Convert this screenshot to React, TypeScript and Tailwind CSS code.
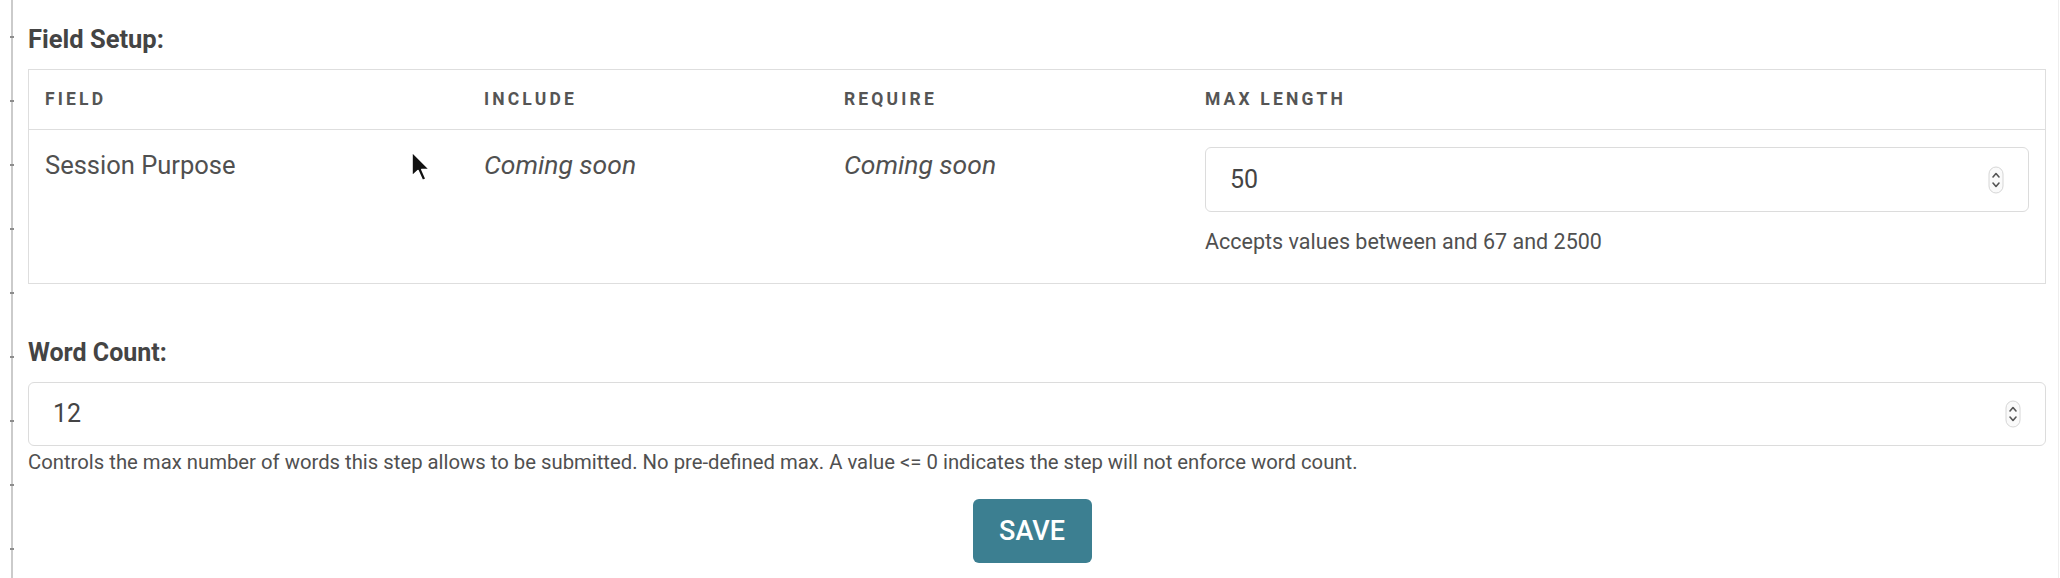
import React from "react";

const font = { fontFamily: "Roboto, 'Liberation Sans', sans-serif" };

function Spinner() {
  return (
    <svg width="16" height="28" viewBox="0 0 16 28" className="shrink-0">
      <rect x="1" y="1" width="14" height="26" rx="7" fill="#fafafa" stroke="#d6d6d6" strokeWidth="1" />
      <path d="M5 11 L8 7.5 L11 11" fill="none" stroke="#555" strokeWidth="1.6" strokeLinecap="round" strokeLinejoin="round" />
      <path d="M5 17 L8 20.5 L11 17" fill="none" stroke="#555" strokeWidth="1.6" strokeLinecap="round" strokeLinejoin="round" />
    </svg>
  );
}

function NumberBox({ value, height }: { value: string; height: string }) {
  return (
    <div
      className={`flex items-center justify-between border border-[#dcdcdc] rounded-[6px] bg-white pl-[24px] pr-[24px] ${height}`}
    >
      <span className="text-[25px] text-[#444]">{value}</span>
      <Spinner />
    </div>
  );
}

export default function App() {
  const ticks = Array.from({ length: 9 });
  return (
    <div className="relative w-[2060px] h-[578px] bg-white flex overflow-hidden" style={font}>
      {/* left rule */}
      <div className="ml-[11px] w-[2px] h-full bg-[#cbcbcb] flex flex-col items-center pt-[36px] gap-[62px]">
        {ticks.map((_, i) => (
          <div key={i} className="w-[4px] h-[2px] bg-[#8c8c8c] shrink-0" />
        ))}
      </div>

      <div className="ml-[15px] mr-[14px] flex-1 flex flex-col">
        <div className="mt-[24px] text-[25.5px] leading-[30px] font-bold text-[#444]">Field Setup:</div>

        <div className="mt-[15px] border border-[#dedede]">
          <div className="grid grid-cols-[439px_360px_361px_1fr] h-[60px] border-b border-[#dedede] items-center text-[17.5px] font-bold tracking-[0.18em] text-[#555]">
            <div className="pl-[16px]">FIELD</div>
            <div className="pl-[16px]">INCLUDE</div>
            <div className="pl-[16px]">REQUIRE</div>
            <div className="pl-[16px]">MAX LENGTH</div>
          </div>
          <div className="grid grid-cols-[439px_360px_361px_1fr] pt-[17px] pb-[27px] text-[25.5px] leading-[36px] text-[#505050]">
            <div className="pl-[16px]">Session Purpose</div>
            <div className="pl-[16px] italic text-[26.5px]">Coming soon</div>
            <div className="pl-[16px] italic text-[26.5px]">Coming soon</div>
            <div className="px-[16px]">
              <NumberBox value="50" height="h-[65px]" />
              <div className="mt-[16px] text-[21.5px] leading-[28px] text-[#505050]">
                Accepts values between and 67 and 2500
              </div>
            </div>
          </div>
        </div>

        <div className="mt-[54px] text-[25px] leading-[30px] font-bold text-[#444]">Word Count:</div>
        <div className="mt-[14px]">
          <NumberBox value="12" height="h-[64px]" />
        </div>
        <div className="mt-[4px] text-[20.3px] leading-[24px] text-[#505050]">
          Controls the max number of words this step allows to be submitted. No pre-defined max. A value &lt;= 0 indicates the step will not enforce word count.
        </div>
        <div className="mt-[25px] flex justify-center pr-[10px]">
          <button className="w-[119px] h-[64px] rounded-[6px] bg-[#3c7f91] text-white text-[27px] font-medium">
            SAVE
          </button>
        </div>
      </div>

      {/* right faint edge */}
      <div className="absolute right-[1px] top-0 h-full w-[1px] bg-[#eeeeee]" />

      {/* mouse cursor */}
      <svg className="absolute left-[410px] top-[150px]" width="22" height="34" viewBox="0 0 22 34">
        <path d="M2 2 L2 26 L8 20.5 L12.5 30.5 L16 29 L11.8 19.5 L19.5 19.5 Z" fill="#111" stroke="#fff" strokeWidth="1.6" strokeLinejoin="round" />
      </svg>
    </div>
  );
}
